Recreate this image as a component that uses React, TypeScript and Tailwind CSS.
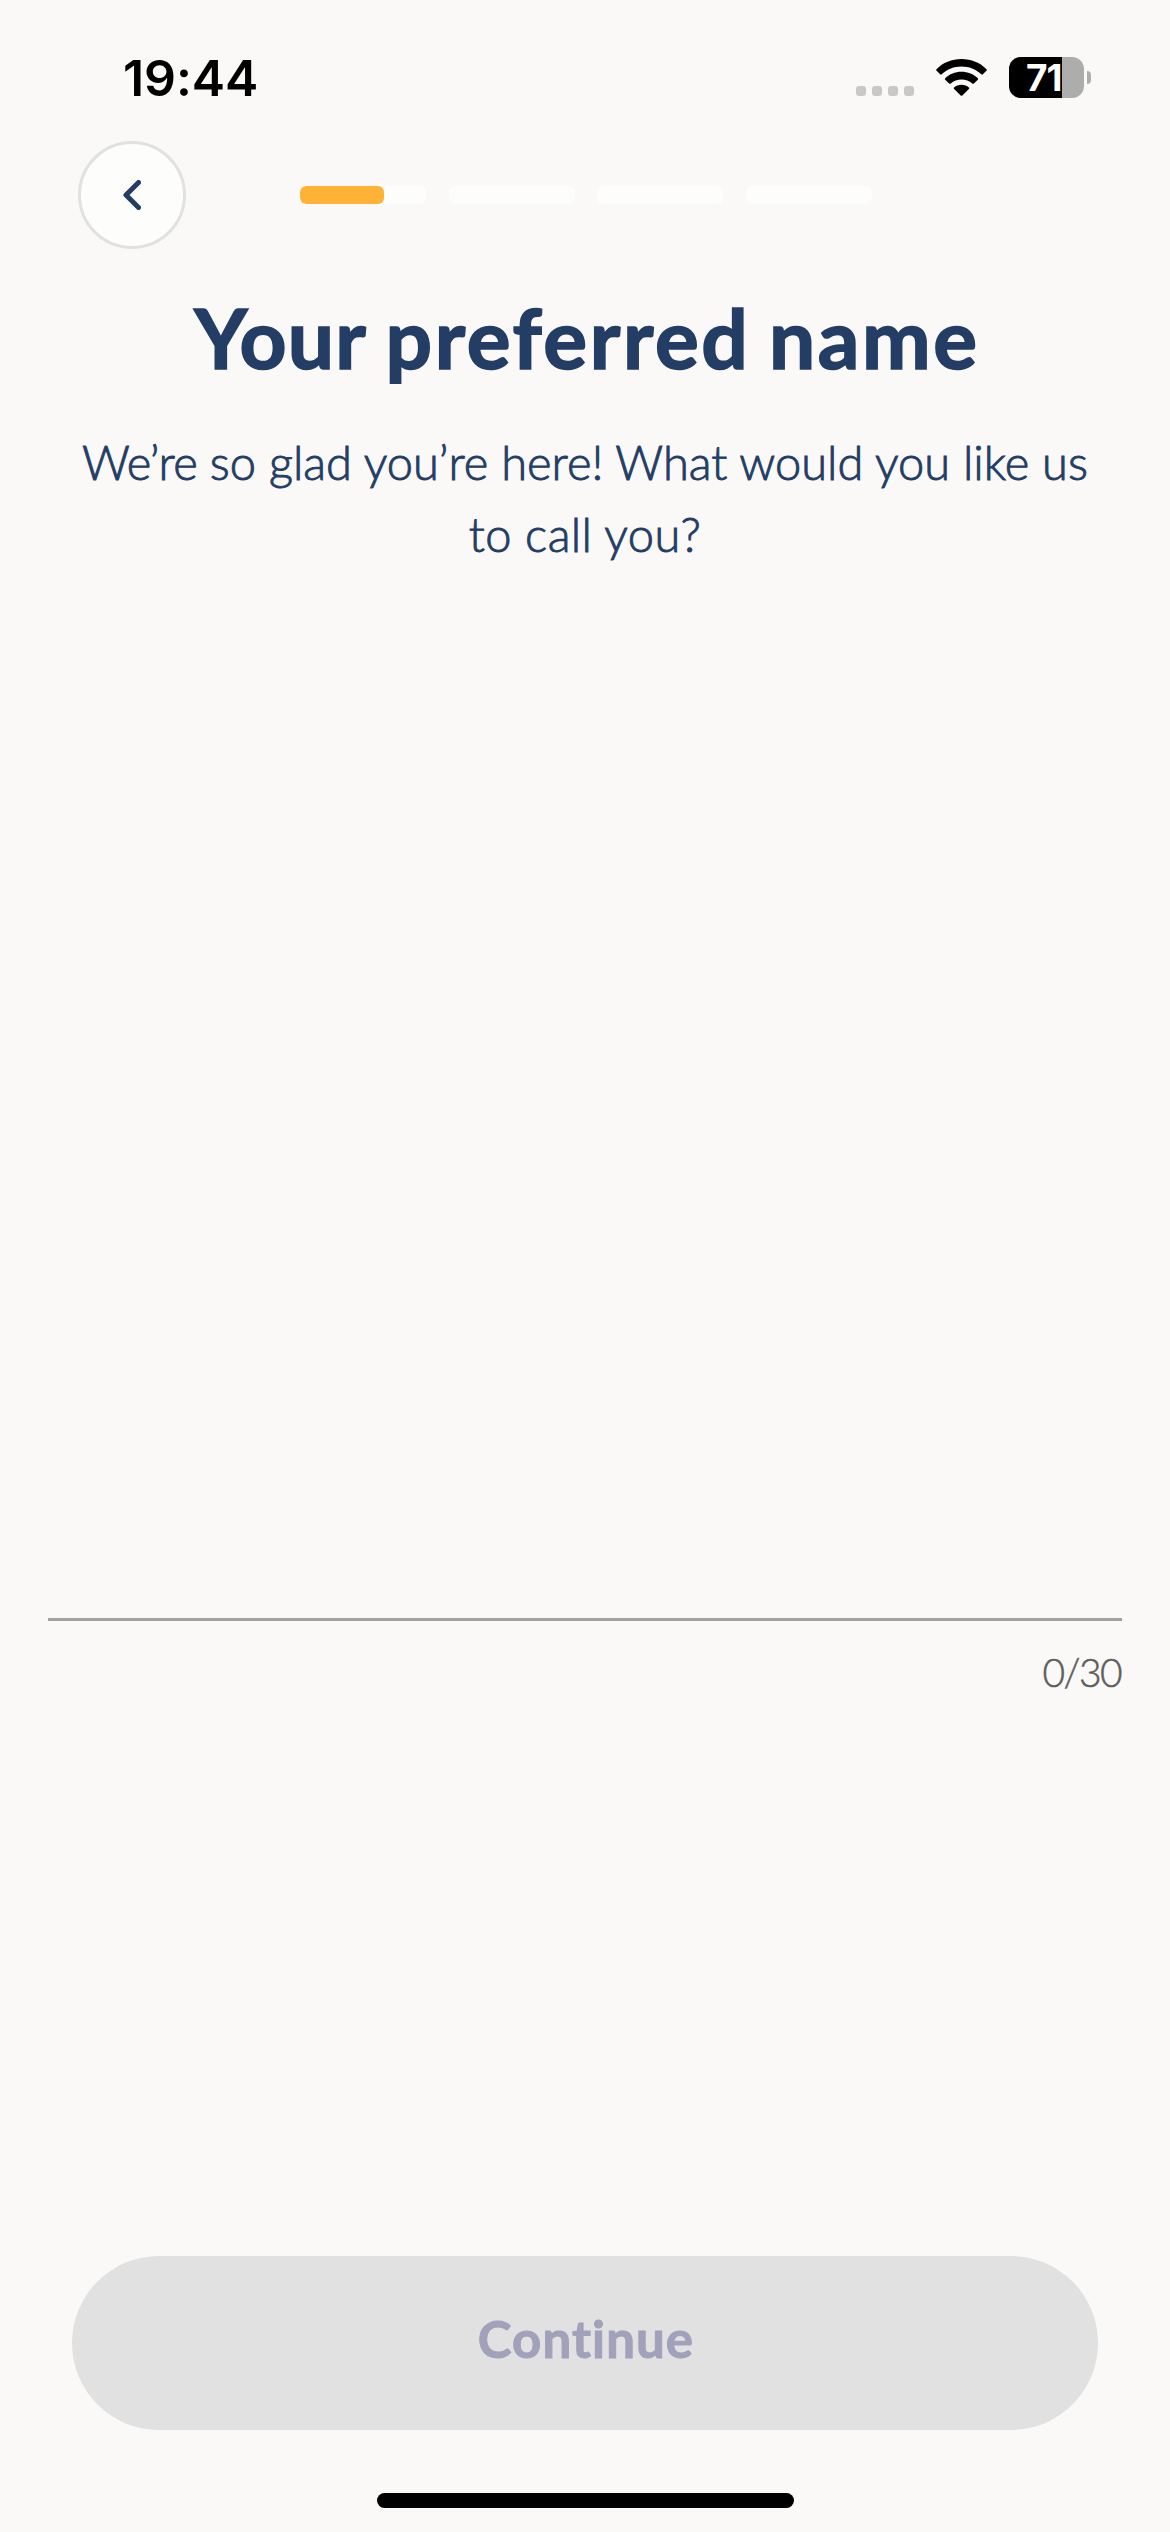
const segments = [67, 0, 0, 0];

function StatusBar() {
  return (
    <header className="flex h-[141px] shrink-0 items-start justify-between pl-[123px] pr-[79px] pt-[57px]">
      <div className="font-['Inter',sans-serif] text-[50px] font-semibold leading-[42px] tracking-[-0.1px] text-black">19:44</div>
      <div className="flex h-[41px] items-center">
        <div className="mr-[22px] flex gap-[6px] pt-[27px]">
          {[0, 1, 2, 3].map((n) => (
            <span key={n} className="size-[10px] rounded-[3px] bg-[#c8c8c7]" />
          ))}
        </div>
        <svg className="mr-[22px] h-[37px] w-[51px]" viewBox="0 0 51 37" fill="#000">
          <path d="M25.5 0C35.2 0 44.2 3.7 50.5 10.2Q51.2 11 50.4 11.7L46.8 15.3Q46.1 16 45.3 15.3C39.8 10.2 33 7.5 25.5 7.5S11.2 10.2 5.7 15.3Q4.9 16 4.2 15.3L.6 11.7Q-.2 11 .5 10.2C6.8 3.7 15.8 0 25.5 0Z" />
          <path d="M25.5 12.8C31.8 12.8 37.5 15.2 41.8 19.2Q42.6 20 41.8 20.8L37.9 24.5Q37.1 25.2 36.3 24.5C33.3 21.8 29.6 20.4 25.5 20.4S17.7 21.8 14.7 24.5Q13.9 25.2 13.1 24.5L9.2 20.8Q8.4 20 9.2 19.2C13.5 15.2 19.2 12.8 25.5 12.8Z" />
          <path d="M25.5 25.8C28.4 25.8 31 26.8 32.9 28.6Q33.6 29.3 32.9 30L26.3 36.5Q25.5 37.2 24.7 36.5L18.1 30Q17.4 29.3 18.1 28.6C20 26.8 22.6 25.8 25.5 25.8Z" />
        </svg>
        <div className="flex h-[41px] w-[75px] items-center rounded-[12px] bg-[#adadac]">
          <div className="flex h-full w-[53px] items-center rounded-l-[12px] bg-black pl-[17px] font-['Inter',sans-serif] text-[37px] font-bold leading-[41px] tracking-[-1px] text-white">
            71
          </div>
        </div>
        <span className="ml-[3px] h-[13px] w-[4px] rounded-r-full bg-[#adadac]" />
      </div>
    </header>
  );
}

export default function App() {
  return (
    <div className="flex h-[2532px] w-[1170px] flex-col overflow-hidden bg-[#faf9f8] font-['Lato',sans-serif] text-[#233d65]">
      <StatusBar />
      <nav className="flex h-[108px] shrink-0 items-center pl-[78px]">
        <button aria-label="Back" className="flex size-[108px] items-center justify-center rounded-full border-[3px] border-[#e1e1e0] bg-[#fdfdfc]">
          <svg className="h-[30px] w-[18px]" viewBox="0 0 18 30" fill="none" stroke="#233d65" strokeWidth="5" strokeLinecap="round" strokeLinejoin="round">
            <path d="M15.5 2.5 3 15l12.5 12.5" />
          </svg>
        </button>
        <div className="ml-[114px] flex w-[572px] justify-between">
          {segments.map((value, i) => (
            <div key={i} className="h-[18px] w-[126px] overflow-hidden rounded-[6px] bg-[#fdfdfc]">
              {value > 0 && <div className="h-full rounded-[6px] bg-[#feb236]" style={{ width: `${value}%` }} />}
            </div>
          ))}
        </div>
      </nav>
      <main className="flex flex-1 flex-col">
        <h1 className="mt-[38px] pl-[4px] text-center text-[82px] font-bold leading-[100px] tracking-[2.6px] [word-spacing:-4px] [-webkit-text-stroke:1.6px_#233d65]"><span className="tracking-[1.2px]">Your</span> preferred name</h1>
        <p className="mt-[39px] whitespace-nowrap text-center text-[47px] font-light leading-[72px] tracking-[0.03px] [-webkit-text-stroke:0.9px_#233d65]">
          <span className="tracking-[-0.7px]">We’re</span> so glad you’re here! What would you like us
          <br />
          <span className="tracking-[0.4px]">to call you?</span>
        </p>
        <div className="mx-[48px] mt-auto border-b-[3px] border-[#a1a19f]" />
        <div className="mb-[560px] mr-[49px] mt-[27px] text-right text-[39px] font-light leading-[48px] tracking-[-1.6px] text-[#5d5d5c] [-webkit-text-stroke:0.5px_#5d5d5c]">0/30</div>
      </main>
      <footer className="flex shrink-0 flex-col items-center pb-[24px]">
        <button className="h-[174px] w-[1026px] rounded-full bg-[#e0e1e0] pb-[7px] pl-[2px] text-[51px] font-bold tracking-[1.1px] text-[#a1a1bb] [-webkit-text-stroke:1px_#a1a1bb]">Continue</button>
        <div className="mt-[63px] h-[15px] w-[417px] rounded-full bg-black" />
      </footer>
    </div>
  );
}
